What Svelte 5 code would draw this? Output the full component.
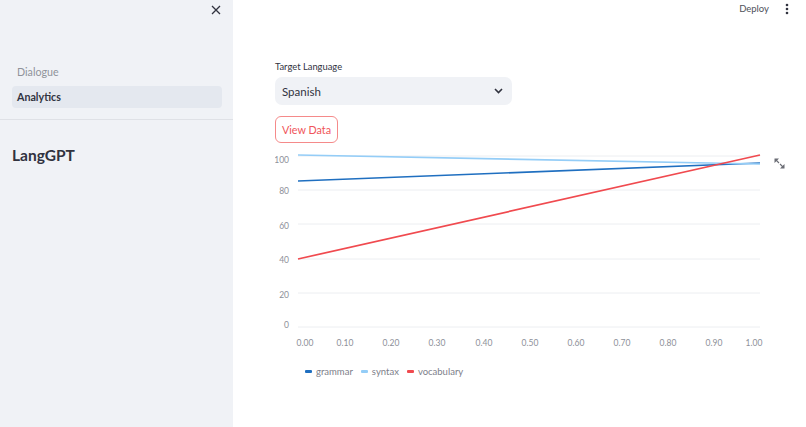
<script>
  const yTicks = [
    { label: '100', gridY: 6, textY: 13 },
    { label: '80', gridY: 40, textY: 44 },
    { label: '60', gridY: 74, textY: 79 },
    { label: '40', gridY: 109, textY: 113 },
    { label: '20', gridY: 143, textY: 148 },
    { label: '0', gridY: 177, textY: 178 }
  ];
  const xTicks = [
    ['0.00', 30], ['0.10', 70], ['0.20', 116], ['0.30', 162], ['0.40', 209], ['0.50', 255],
    ['0.60', 301], ['0.70', 347], ['0.80', 393], ['0.90', 439], ['1.00', 479]
  ];
  const series = [
    { name: 'grammar', color: '#1f6fc0', y1: 31, y2: 13 },
    { name: 'syntax', color: '#94cdf7', y1: 5, y2: 14 },
    { name: 'vocabulary', color: '#f04a4f', y1: 109, y2: 5 }
  ];
  const legend = [
    { name: 'grammar', color: '#1f6fc0' },
    { name: 'syntax', color: '#94cdf7' },
    { name: 'vocabulary', color: '#f04a4f' }
  ];
</script>

<div class="page">
  <aside class="sidebar">
    <div class="sidebar-top">
      <button class="close" aria-label="Close sidebar">
        <svg width="10" height="10" viewBox="0 0 10 10"><path d="M1 1 L9 9 M9 1 L1 9" stroke="#31333f" stroke-width="1.3" fill="none" /></svg>
      </button>
    </div>
    <nav class="nav">
      <div class="nav-item">Dialogue</div>
      <div class="nav-item active">Analytics</div>
    </nav>
    <div class="sidebar-body">
      <h2>LangGPT</h2>
    </div>
  </aside>

  <main class="main">
    <header class="toolbar">
      <span class="deploy">Deploy</span>
      <svg class="more" width="4" height="12" viewBox="0 0 4 12">
        <circle cx="2" cy="2" r="1.3" fill="#31333f" />
        <circle cx="2" cy="6" r="1.3" fill="#31333f" />
        <circle cx="2" cy="10" r="1.3" fill="#31333f" />
      </svg>
    </header>

    <div class="content">
      <label class="field-label" for="lang">Target Language</label>
      <div class="select" id="lang">
        <span>Spanish</span>
        <svg width="9" height="6" viewBox="0 0 9 6"><path d="M1 1 L4.5 4.5 L8 1" stroke="#31333f" stroke-width="1.6" fill="none" /></svg>
      </div>
      <button class="view-data">View Data</button>

      <div class="chart">
        <svg width="510" height="235" viewBox="0 0 510 235">
          {#each yTicks as t}
            <line x1="23" x2="485" y1={t.gridY} y2={t.gridY} stroke="#eceef1" stroke-width="1" />
            <text x="14" y={t.textY} text-anchor="end" class="tick">{t.label}</text>
          {/each}
          {#each xTicks as [label, x]}
            <text {x} y="196" text-anchor="middle" class="tick">{label}</text>
          {/each}
          {#each series as s}
            <line x1="23" x2="485" y1={s.y1} y2={s.y2} stroke={s.color} stroke-width="1.7" />
          {/each}
        </svg>
        <svg class="expand" width="11" height="11" viewBox="0 0 11 11">
          <path d="M0.5 0.5 L5 0.5 L0.5 5 Z M10.5 10.5 L6 10.5 L10.5 6 Z" fill="#6b6d75" />
          <path d="M2 2 L5 5 M9 9 L6 6" stroke="#6b6d75" stroke-width="1.1" />
        </svg>
      </div>

      <div class="legend">
        {#each legend as l}
          <span class="legend-item"><i style="background: {l.color}"></i>{l.name}</span>
        {/each}
      </div>
    </div>
  </main>
</div>

<style>
  :global(body) {
    margin: 0;
    background: #fff;
  }

  .page {
    display: flex;
    width: 806px;
    height: 427px;
    overflow: hidden;
    font-family: Lato, "Noto Sans", sans-serif;
    color: #31333f;
  }

  .sidebar {
    width: 233px;
    flex: none;
    background: #f0f2f6;
    display: flex;
    flex-direction: column;
  }

  .sidebar-top {
    height: 61px;
    display: flex;
    justify-content: flex-end;
    padding: 5px 12px 0 0;
    box-sizing: border-box;
  }

  .close {
    border: none;
    background: none;
    padding: 0;
    width: 10px;
    height: 10px;
    display: flex;
  }

  .nav {
    padding: 0 11px 0 12px;
    display: flex;
    flex-direction: column;
    gap: 3px;
    height: 58px;
    border-bottom: 1px solid #dfe1e6;
  }

  .nav-item {
    height: 22px;
    line-height: 22px;
    padding: 0 5px;
    font-size: 10.7px;
    color: #8f929a;
    border-radius: 4px;
  }

  .nav-item.active {
    background: #e4e8ef;
    color: #31333f;
    font-weight: 700;
  }

  .sidebar-body {
    padding: 24px 12px 0;
  }

  h2 {
    margin: 0;
    font-size: 15.5px;
    line-height: 22px;
    font-weight: 700;
  }

  .main {
    flex: 1;
    min-width: 0;
  }

  .toolbar {
    height: 17px;
    display: flex;
    justify-content: flex-end;
    align-items: center;
    gap: 16px;
    padding-right: 17px;
  }

  .deploy {
    font-size: 9.5px;
    color: #4f515b;
  }

  .content {
    padding: 43px 0 0 42px;
  }

  .field-label {
    display: block;
    font-size: 9.4px;
    line-height: 13px;
  }

  .select {
    margin-top: 4px;
    width: 237px;
    height: 28px;
    box-sizing: border-box;
    background: #f0f2f6;
    border-radius: 7px;
    display: flex;
    align-items: center;
    justify-content: space-between;
    padding: 0 9px 0 7px;
    font-size: 11.5px;
  }

  .view-data {
    display: block;
    margin-top: 11px;
    width: 63px;
    height: 27px;
    padding: 0;
    background: #fff;
    border: 1px solid #f58a8a;
    border-radius: 6px;
    color: #f0555a;
    font-family: inherit;
    font-size: 10.8px;
  }

  .chart {
    position: relative;
    margin-top: 7px;
    height: 235px;
  }

  .chart > svg:first-child {
    display: block;
  }

  .expand {
    position: absolute;
    left: 499px;
    top: 8px;
  }

  .tick {
    font-family: Lato, sans-serif;
    font-size: 8.5px;
    fill: #8d9099;
  }

  .legend {
    display: flex;
    gap: 8px;
    margin-top: -19px;
    margin-left: 30px;
    position: relative;
    font-size: 9.5px;
    color: #7d808a;
  }

  .legend-item {
    display: flex;
    align-items: center;
    gap: 4px;
  }

  .legend-item i {
    width: 7px;
    height: 3px;
    border-radius: 1px;
  }
</style>
